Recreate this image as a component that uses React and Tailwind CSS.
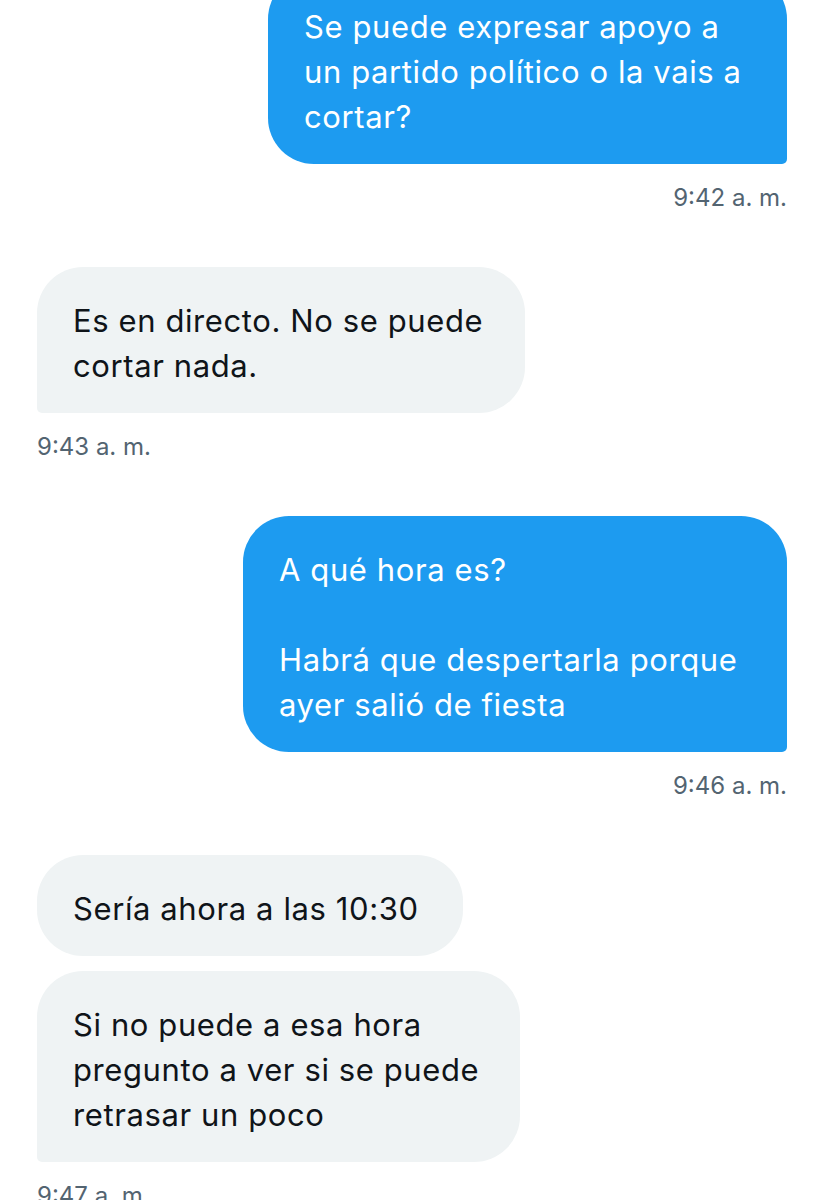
import React from 'react';

const messages = [
  { id: 1, mine: true, width: 'w-[519px]', first: true, lines: ['Se puede expresar apoyo a', 'un partido político o la vais a', 'cortar?'], time: '9:42 a. m.' },
  { id: 2, mine: false, width: 'w-[488px]', lines: ['Es en directo. No se puede', 'cortar nada.'], time: '9:43 a. m.' },
  { id: 3, mine: true, width: 'w-[544px]', lines: ['A qué hora es?', '', 'Habrá que despertarla porque', 'ayer salió de fiesta'], time: '9:46 a. m.' },
  { id: 4, mine: false, width: 'w-[426px]', grouped: true, lines: ['Sería ahora a las 10:30'] },
  { id: 5, mine: false, width: 'w-[483px]', lines: ['Si no puede a esa hora', 'pregunto a ver si se puede', 'retrasar un poco'], time: '9:47 a. m.' },
];

function Bubble({ msg }) {
  // sender bubbles are blue and sit on the right, the other side is light gray
  const shape = msg.mine
    ? 'rounded-[46px] rounded-br-[5px] bg-[#1d9bf0] text-white'
    : msg.grouped
      ? 'rounded-[46px] bg-[#eff3f4] text-[#0f1419]'
      : 'rounded-[46px] rounded-bl-[5px] bg-[#eff3f4] text-[#0f1419]';

  return (
    <div className={`flex flex-col ${msg.mine ? 'items-end' : 'items-start'} ${msg.first ? '-mt-[27px]' : ''}`}>
      <div className={`${msg.width} ${shape} pl-[36px] pr-[30px] pt-[31px] pb-[25px] text-[31px] leading-[45px] tracking-[0.6px]`}>
        {msg.lines.map((line, i) => (
          <div key={i} className="whitespace-nowrap h-[45px]">{line}</div>
        ))}
      </div>
      {msg.time && (
        <div className="mt-[20px] mb-[55px] text-[24px] leading-[28px] text-[#536471]">{msg.time}</div>
      )}
      {msg.grouped && <div className="h-[15px]" />}
    </div>
  );
}

export default function App() {
  return (
    <div className="w-[821px] h-[1200px] overflow-hidden bg-white font-['Inter','Liberation_Sans',sans-serif]">
      <div className="flex flex-col pl-[37px] pr-[34px]">
        {messages.map((msg) => (
          <Bubble key={msg.id} msg={msg} />
        ))}
      </div>
    </div>
  );
}
